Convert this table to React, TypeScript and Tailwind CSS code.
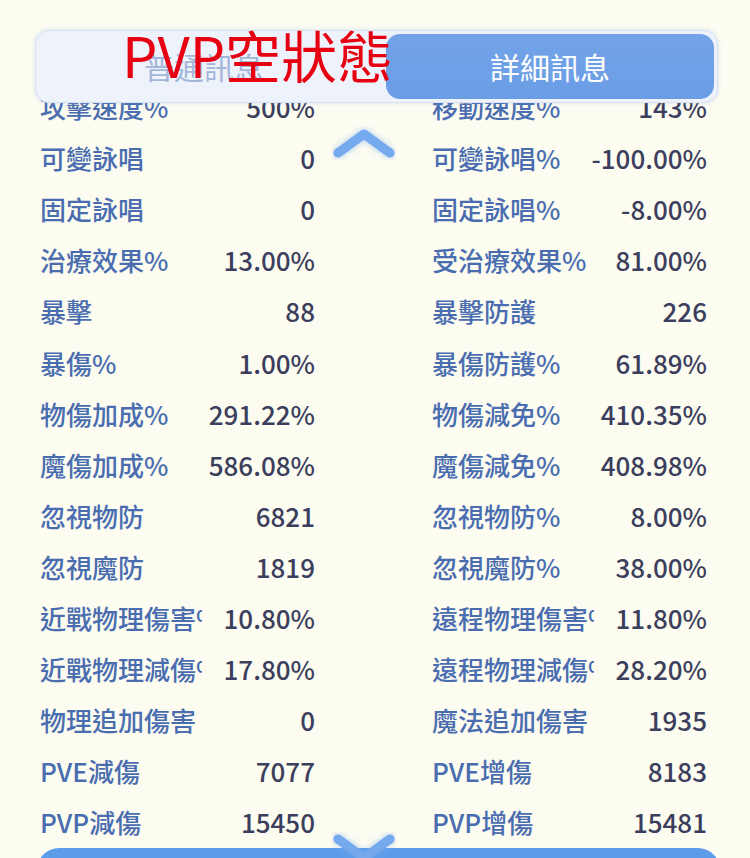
const rows: [string, string, string, string][] = [
  ["攻擊速度%", "500%", "移動速度%", "143%"],
  ["可變詠唱", "0", "可變詠唱%", "-100.00%"],
  ["固定詠唱", "0", "固定詠唱%", "-8.00%"],
  ["治療效果%", "13.00%", "受治療效果%", "81.00%"],
  ["暴擊", "88", "暴擊防護", "226"],
  ["暴傷%", "1.00%", "暴傷防護%", "61.89%"],
  ["物傷加成%", "291.22%", "物傷減免%", "410.35%"],
  ["魔傷加成%", "586.08%", "魔傷減免%", "408.98%"],
  ["忽視物防", "6821", "忽視物防%", "8.00%"],
  ["忽視魔防", "1819", "忽視魔防%", "38.00%"],
  ["近戰物理傷害%", "10.80%", "遠程物理傷害%", "11.80%"],
  ["近戰物理減傷%", "17.80%", "遠程物理減傷%", "28.20%"],
  ["物理追加傷害", "0", "魔法追加傷害", "1935"],
  ["PVE減傷", "7077", "PVE增傷", "8183"],
  ["PVP減傷", "15450", "PVP增傷", "15481"],
];

const Stat = ({ label, value }: { label: string; value: string }) => (
  <div className="flex items-center">
    <span className="w-[162px] overflow-hidden whitespace-nowrap text-[#4a6db0]">
      {label}
    </span>
    <span className="flex-1 text-right whitespace-nowrap text-[#3b3e5c]">
      {value}
    </span>
  </div>
);

const Chevron = ({ up }: { up: boolean }) => (
  <svg width="64" height="34" viewBox="0 0 64 34" fill="none">
    <path
      d={up ? "M6 27 L32 8 L58 27" : "M6 7 L32 26 L58 7"}
      stroke="#74a9ee"
      strokeWidth="9"
      strokeLinecap="round"
      strokeLinejoin="round"
      style={{ filter: "drop-shadow(0 0 3px rgba(116,169,238,0.6))" }}
    />
  </svg>
);

export default function App() {
  return (
    <div
      className="relative h-[858px] w-[750px] overflow-hidden bg-[#fcfcf1]"
      style={{ fontFamily: '"Noto Sans CJK TC", "Noto Sans", sans-serif' }}
    >
      <div className="flex flex-col pt-[81px] text-[26px] font-medium">
        {rows.map((r, i) => (
          <div
            key={i}
            className="grid h-[51.1px] grid-cols-[275px_275px] gap-x-[117px] px-[40px]"
          >
            <Stat label={r[0]} value={r[1]} />
            <Stat label={r[2]} value={r[3]} />
          </div>
        ))}
      </div>

      {/* tab bar over the list */}
      <div className="absolute left-[35px] top-[30px] flex h-[73px] w-[683px] items-center rounded-[14px] border border-[#d8e1f4] bg-[#eef2fb] p-[3px] shadow-[0_0_4px_rgba(150,175,225,0.35)]">
        <div className="flex h-full w-[330px] items-center justify-center text-[30px] text-[#a3b6da]">
          普通訊息
        </div>
        <div className="ml-auto flex h-full w-[328px] items-center justify-center rounded-[14px] bg-gradient-to-b from-[#72a3e8] to-[#6b9de6] text-[30px] text-white">
          詳細訊息
        </div>
      </div>

      <div className="absolute left-[122px] top-[26px] text-[56px] leading-none text-[#e60012]">
        PVP空狀態
      </div>

      <div className="absolute left-[332px] top-[126px]">
        <Chevron up />
      </div>

      <div className="absolute left-[37px] top-[848px] h-[40px] w-[683px] rounded-t-[22px] bg-[#5c9ce8]" />
      <div className="absolute left-[332px] top-[832px]">
        <Chevron up={false} />
      </div>
    </div>
  );
}
